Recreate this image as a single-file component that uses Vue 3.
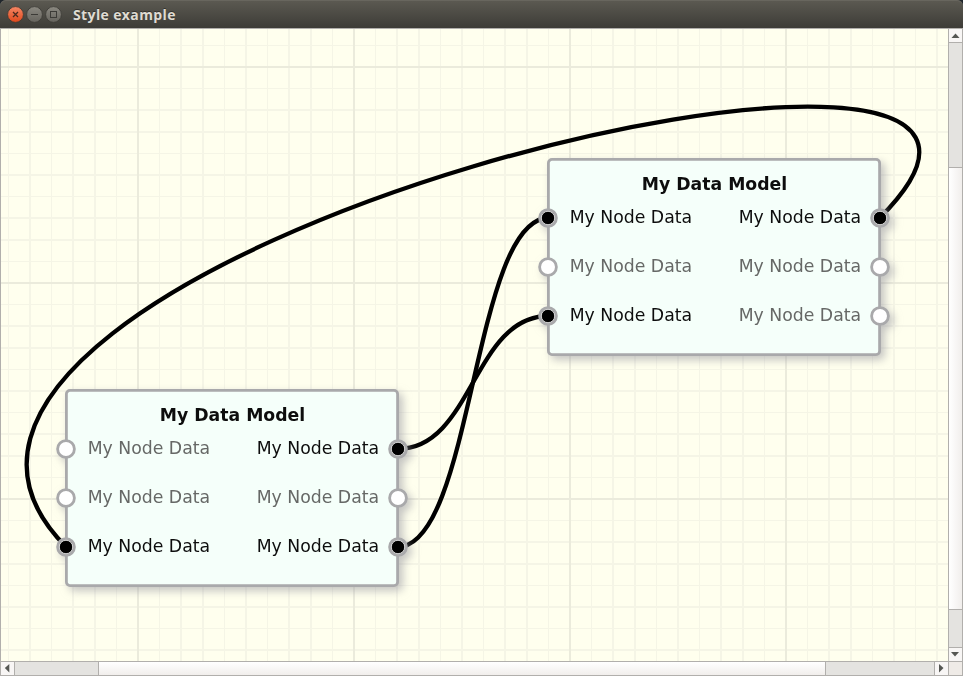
<script setup>
const PERIOD = 108
const STEPS = [[-1, 2], [21, 1], [42, 2], [64, 2], [86, 1]]

function gridLines(origin, from, to) {
  const lines = []
  for (let base = origin - PERIOD * 2; base < to; base += PERIOD) {
    STEPS.forEach(([offset, size], i) => {
      const pos = base + offset
      if (pos + size > from && pos < to) {
        const major = i === 0 && (base - origin) % (PERIOD * 2) === 0
        lines.push({ pos, size, major })
      }
    })
  }
  return lines.sort((a, b) => a.major - b.major)
}

const columns = gridLines(138, 1, 948)
const rows = gridLines(67, 29, 661)

const links = [
  'M879.7 218C1167.7 -70 -221.8 259 66.2 547',
  'M397.5 449C473 449 473 316 548.6 316',
  'M397.5 547C473 547 473 218 548.6 218'
]

const nodes = [
  { id: 'a', x: 64, y: 360, inputs: [false, false, true], outputs: [true, false, true] },
  { id: 'b', x: 546, y: 129, inputs: [true, false, true], outputs: [true, false, false] }
]
</script>

<template>
  <div class="window">
    <header class="titlebar">
      <svg class="controls" width="60" height="28" viewBox="0 0 60 28">
        <defs>
          <linearGradient id="closeFill" x1="0" y1="0" x2="0" y2="1">
            <stop offset="0" stop-color="#f58765" /><stop offset="1" stop-color="#e0481b" />
          </linearGradient>
          <linearGradient id="plainFill" x1="0" y1="0" x2="0" y2="1">
            <stop offset="0" stop-color="#8b8981" /><stop offset="1" stop-color="#65635d" />
          </linearGradient>
        </defs>
        <circle cx="10.5" cy="14.5" r="7.9" fill="url(#closeFill)" stroke="#3b3832" stroke-width="0.8" />
        <circle cx="29.5" cy="14.5" r="7.9" fill="url(#plainFill)" stroke="#3b3a35" stroke-width="0.8" />
        <circle cx="48.5" cy="14.5" r="7.9" fill="url(#plainFill)" stroke="#3b3a35" stroke-width="0.8" />
        <path d="M8 12l5 5M13 12l-5 5" stroke="#4b2a1e" stroke-width="1.3" />
        <path d="M26 14.5h7" stroke="#3c3b37" />
        <rect x="45.5" y="11.5" width="6" height="6" fill="none" stroke="#3c3b37" />
      </svg>
      <span class="title">Style example</span>
    </header>
    <main class="view">
      <div class="canvas">
        <svg class="scene" width="947" height="632" viewBox="1 29 947 632">
          <rect x="1" y="29" width="947" height="632" fill="#ffffee" />
          <g shape-rendering="crispEdges">
            <rect v-for="c in columns.filter(l => !l.major)" :key="'c' + c.pos" :x="c.pos" y="29" :width="c.size" height="632" fill="#f5f5e6" />
            <rect v-for="r in rows.filter(l => !l.major)" :key="'r' + r.pos" x="1" :y="r.pos" width="947" :height="r.size" fill="#f5f5e6" />
            <rect v-for="c in columns.filter(l => l.major)" :key="'m' + c.pos" :x="c.pos" y="29" :width="c.size" height="632" fill="#ebebdc" />
            <rect v-for="r in rows.filter(l => l.major)" :key="'n' + r.pos" x="1" :y="r.pos" width="947" :height="r.size" fill="#ebebdc" />
          </g>
          <path v-for="d in links" :key="d" :d="d" fill="none" stroke="#000" stroke-width="4.3" />
        </svg>
        <section v-for="n in nodes" :key="n.id" class="node" :style="{ left: n.x + 'px', top: n.y + 'px' }">
          <svg class="frame" width="334" height="198">
            <rect x="1.4" y="1.4" width="331.2" height="195.2" rx="3.6" fill="#f5fffa" stroke="#a9a9ab" stroke-width="2.8" />
          </svg>
          <h2 class="caption">My Data Model</h2>
          <div v-for="i in 3" :key="i" class="ports">
            <template v-for="(used, side) in [n.inputs[i - 1], n.outputs[i - 1]]" :key="side">
              <svg v-if="side === 0" class="port" width="20" height="20" viewBox="-10 -10 20 20">
                <circle r="8.4" fill="#fff" stroke="#a9a9ab" stroke-width="2.8" />
                <circle v-if="used" r="7.8" fill="#a9a9ab" />
                <circle v-if="used" r="6.7" fill="#000" stroke="#f4f4f4" stroke-width="0.8" />
              </svg>
              <span class="label" :class="{ used }">My Node Data</span>
              <svg v-if="side === 1" class="port" width="20" height="20" viewBox="-10 -10 20 20">
                <circle r="8.4" fill="#fff" stroke="#a9a9ab" stroke-width="2.8" />
                <circle v-if="used" r="7.8" fill="#a9a9ab" />
                <circle v-if="used" r="6.7" fill="#000" stroke="#f4f4f4" stroke-width="0.8" />
              </svg>
            </template>
          </div>
        </section>
      </div>
      <div class="vbar">
        <div class="button top"><svg width="13" height="13"><path d="M2.5 9L6.5 4.5L10.5 9Z" fill="#555753" /></svg></div>
        <div class="track v-before"></div>
        <div class="thumb v-thumb"></div>
        <div class="track v-after"></div>
        <div class="button bottom"><svg width="13" height="13"><path d="M2 4L6 8.5L10 4Z" fill="#555753" /></svg></div>
      </div>
      <div class="hbar">
        <div class="button left"><svg width="13" height="13"><path d="M8.3 2L3.8 6L8.3 10.5Z" fill="#555753" /></svg></div>
        <div class="track h-before"></div>
        <div class="thumb h-thumb"></div>
        <div class="track h-after"></div>
        <div class="button right"><svg width="13" height="13"><path d="M4 2L8.5 6L4 10.5Z" fill="#555753" /></svg></div>
      </div>
      <div class="corner"></div>
    </main>
  </div>
</template>

<style>
body { background: #20262c; }
</style>

<style scoped>
.window { width: 963px; height: 676px; display: flex; flex-direction: column; overflow: hidden; box-sizing: border-box; }
.titlebar { height: 28px; flex: none; display: flex; align-items: center; padding-left: 5px; box-sizing: border-box; border-radius: 6px 6px 0 0; background: linear-gradient(#5c5a52, #3d3c37); box-shadow: inset 0 1px #68665e; }
.controls { display: block; flex: none; }
.title { margin-left: 8px; font: 700 14px/28px "Open Sans", "Noto Sans", sans-serif; letter-spacing: 0.38px; color: #dfdbd2; padding-top: 1px; text-shadow: 0 -1px #33322e; white-space: nowrap; }
.view { height: 648px; box-sizing: border-box; border: 1px solid #b1afac; display: grid; grid-template-columns: 947px 14px; grid-template-rows: 632px 14px; background: #efebe7; }
.canvas { position: relative; overflow: hidden; }
.scene { display: block; }
.node { position: absolute; width: 334px; height: 198px; box-sizing: border-box; padding: 3px 0; filter: drop-shadow(4px 4px 4.5px rgba(150, 150, 158, 0.55)); font-family: "DejaVu Sans", sans-serif; }
.frame { position: absolute; left: 0; top: 0; display: block; }
.caption { position: relative; margin: 0; padding: 11px 0 0 1px; height: 21px; font-size: 17.28px; line-height: 24px; font-weight: 700; text-align: center; color: #0d0d0d; }
.ports { position: relative; display: flex; align-items: center; height: 49px; margin: 0 -8.6px 0 -8.8px; }
.port { flex: none; display: block; overflow: visible; }
.label { font-size: 17.28px; line-height: 24px; color: #666866; margin-left: 11.5px; margin-top: -2px; white-space: nowrap; }
.port + .label + .label { margin-left: auto; margin-right: 8.5px; }
.used { color: #0d0d0d; }
.vbar { display: flex; flex-direction: column; border-left: 1px solid #b1afac; background: #e4e3e0; }
.hbar { display: flex; border-top: 1px solid #b1afac; background: #e4e3e0; }
.corner { border-left: 1px solid #b1afac; border-top: 1px solid #b1afac; }
.button { width: 13px; height: 13px; flex: none; background: #f8f6f5; }
.button svg { display: block; }
.top { border-bottom: 1px solid #b1afac; }
.bottom { border-top: 1px solid #b1afac; }
.left { border-right: 1px solid #b1afac; }
.right { border-left: 1px solid #b1afac; }
.v-before { height: 124px; }
.v-thumb { height: 441px; border: solid #b1afac; border-width: 1px 0; background: linear-gradient(90deg, #fff, #f1eeec); }
.v-after { height: 37px; }
.h-before { width: 83px; }
.h-thumb { width: 726px; border: solid #b1afac; border-width: 0 1px; background: linear-gradient(#fff, #f1eeec); }
.h-after { width: 108px; }
.track { flex: none; }
.thumb { flex: none; }
</style>
